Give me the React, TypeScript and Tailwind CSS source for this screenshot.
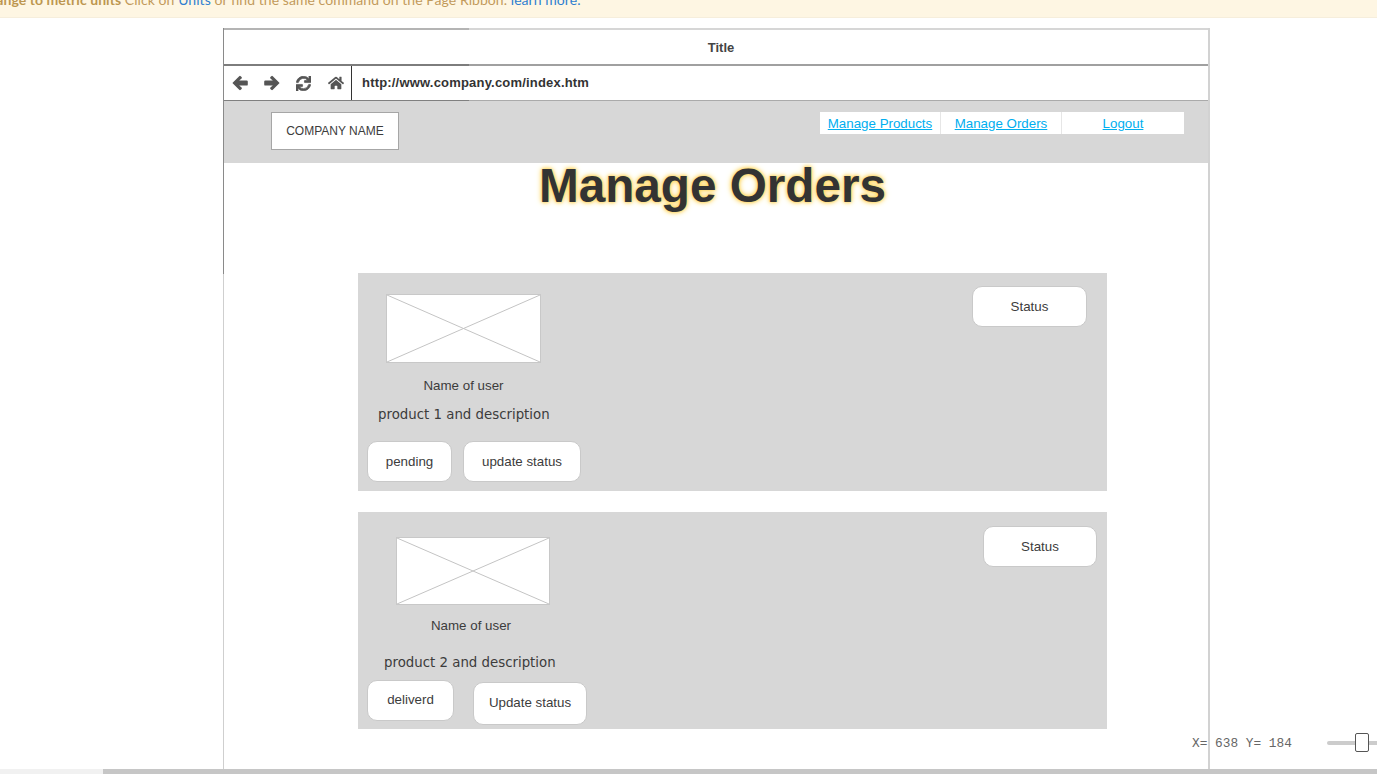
import { FaSync, FaHome } from "react-icons/fa";

const sans = "font-['Liberation_Sans',Arial,sans-serif]";

function Placeholder({ className }: { className: string }) {
  return (
    <div className={`bg-white border border-[#c8c8c8] ${className}`}>
      <svg className="block w-full h-full" viewBox="0 0 100 100" preserveAspectRatio="none">
        <line x1="0" y1="0" x2="100" y2="100" stroke="#c4c4c4" strokeWidth="1" vectorEffect="non-scaling-stroke" />
        <line x1="100" y1="0" x2="0" y2="100" stroke="#c4c4c4" strokeWidth="1" vectorEffect="non-scaling-stroke" />
      </svg>
    </div>
  );
}

function FatArrow({ flip }: { flip?: boolean }) {
  return (
    <svg width="16" height="16" viewBox="0 0 16 16" className={flip ? "-scale-x-100" : ""} fill="#555">
      <path d="M0.4 8 L7.2 1.2 Q8 0.5 8.7 1.2 L9.6 2.1 Q10.2 2.8 9.6 3.5 L7.2 5.4 L14.6 5.4 Q15.8 5.4 15.8 6.6 L15.8 9.4 Q15.8 10.6 14.6 10.6 L7.2 10.6 L9.6 12.5 Q10.2 13.2 9.6 13.9 L8.7 14.8 Q8 15.5 7.2 14.8 Z" />
    </svg>
  );
}

function Pill({ label, className }: { label: string; className: string }) {
  return (
    <div className={`flex items-center justify-center shrink-0 bg-white border border-[#c9c9c9] rounded-[10px] text-[13.33px] text-[#3c3c3c] ${className}`}>
      {label}
    </div>
  );
}

export default function App() {
  return (
    <div className={`relative flex flex-col w-[1377px] h-[774px] overflow-hidden bg-white ${sans}`}>
      <div className="h-[18px] shrink-0 overflow-hidden bg-[#fef6e3] border-b border-[#f6eedc] font-['Lato',sans-serif] text-[14px] leading-[14px] tracking-[0.06px] whitespace-nowrap text-[#c29a5b]">
        <div className="-mt-[7px] -ml-[21px]">
          <span className="font-bold text-[#bd9650]">Change to metric units</span> Click on <span className="text-[#2f7fd0]">Units</span> or find the same command on the Page Ribbon. <span className="text-[#2f7fd0]">learn more.</span>
        </div>
      </div>

      <div className="flex-1 min-h-0 pt-[10px] pl-[223px]">
        <div className="w-[987px] h-full flex flex-col border-r-2 border-[#d2d2d2] bg-[linear-gradient(to_bottom,#8a8a8a_0,#8a8a8a_246px,#cfcfcf_246px)] pl-[1px]">
          <div className="h-[2px] shrink-0 bg-[linear-gradient(to_right,#b4b4b4_245px,#d6d6d6_245px)]" />
          <div className="h-[34px] shrink-0 bg-white flex items-center justify-center pl-[10px] pt-[1px] text-[13px] font-bold text-[#444]">Title</div>
          <div className="h-[2px] shrink-0 bg-[linear-gradient(to_right,#7d7d7d_245px,#a0a0a0_245px)]" />
          <div className="h-[34px] shrink-0 bg-white flex items-center">
            <div className="w-[128px] h-full shrink-0 flex items-center pl-[8px] gap-[16px] border-r border-[#333] text-[#555]">
              <FatArrow />
              <FatArrow flip />
              <FaSync size={15} stroke="currentColor" strokeWidth={24} />
              <FaHome size={16} className="ml-[1px]" />
            </div>
            <div className="pl-[10px] text-[13px] tracking-[0.19px] font-bold text-[#333]">http://www.company.com/index.htm</div>
          </div>
          <div className="h-[1px] shrink-0 bg-[linear-gradient(to_right,#808080_245px,#aaaaaa_245px)]" />
          <div className="h-[62px] shrink-0 bg-[#d7d7d7] flex justify-between pl-[47px] pr-[24px] pt-[11px]">
            <div className="w-[128px] h-[38px] flex items-center justify-center bg-white border border-[#a6a6a6] text-[12px] text-[#3c3c3c]">COMPANY NAME</div>
            <div className="h-[22px] flex gap-[1px] bg-[#e6e6e6] text-[13.33px] text-[#00aeef] underline">
              <div className="w-[120px] flex items-center justify-center bg-white pt-[1px]">Manage Products</div>
              <div className="w-[120px] flex items-center justify-center bg-white pt-[1px]">Manage Orders</div>
              <div className="w-[122px] flex items-center justify-center bg-white pt-[1px]">Logout</div>
            </div>
          </div>

          <div className="flex-1 min-h-0 bg-white overflow-hidden">
            <div className="h-[110px] flex justify-center pr-[7px]">
              <h1 className="text-[47.7px] leading-[46px] font-bold text-[#333] [text-shadow:0_0_3px_#ffd65c,0_0_5px_#ffd65c,0_0_7px_#ffe9a8]">Manage Orders</h1>
            </div>

            <div className="ml-[134px] w-[749px] h-[218px] bg-[#d7d7d7] flex justify-between pl-[9px] pr-[20px]">
              <div className="flex flex-col">
                <Placeholder className="ml-[19px] mt-[21px] w-[155px] h-[69px]" />
                <div className="ml-[19px] w-[155px] mt-[14px] text-center text-[13.33px] leading-[18px] text-[#3c3c3c] whitespace-nowrap">Name of user</div>
                <div className="ml-[11px] mt-[11px] font-['DejaVu_Sans',sans-serif] text-[13.33px] leading-[18px] text-[#3c3c3c] whitespace-nowrap">product 1 and description</div>
                <div className="flex gap-[11px] mt-[17px]">
                  <Pill label="pending" className="w-[85px] h-[41px]" />
                  <Pill label="update status" className="w-[118px] h-[41px]" />
                </div>
              </div>
              <Pill label="Status" className="w-[115px] h-[41px] mt-[13px]" />
            </div>

            <div className="ml-[134px] mt-[21px] w-[749px] h-[217px] bg-[#d7d7d7] flex justify-between pl-[9px] pr-[10px]">
              <div className="flex flex-col">
                <Placeholder className="ml-[29px] mt-[25px] w-[154px] h-[68px]" />
                <div className="w-[208px] mt-[12px] text-center text-[13.33px] leading-[18px] text-[#3c3c3c] whitespace-nowrap">Name of user</div>
                <div className="ml-[17px] mt-[19px] font-['DejaVu_Sans',sans-serif] text-[13.33px] leading-[18px] text-[#3c3c3c] whitespace-nowrap">product 2 and description</div>
                <div className="flex items-start gap-[19px] mt-[8px]">
                  <Pill label="deliverd" className="w-[87px] h-[41px] pb-[2px]" />
                  <Pill label="Update status" className="w-[114px] h-[43px] mt-[2px] pb-[2px]" />
                </div>
              </div>
              <Pill label="Status" className="w-[114px] h-[41px] mt-[14px]" />
            </div>
          </div>
        </div>
      </div>

      <div className="h-[5px] shrink-0 bg-[#c6c6c6]">
        <div className="w-[103px] h-full bg-[#f1f1f1]" />
      </div>

      <div className="absolute left-[1192px] top-[736px] font-['Liberation_Mono',monospace] text-[12.8px] leading-[16px] text-[#666] whitespace-pre">X= 638 Y= 184</div>
      <div className="absolute left-[1327px] right-0 top-[741px] h-[4px] bg-[#cccccc] rounded-l-[2px]" />
      <div className="absolute left-[1355px] top-[733px] w-[14px] h-[19px] bg-white border border-[#555] rounded-[2px]" />
    </div>
  );
}
